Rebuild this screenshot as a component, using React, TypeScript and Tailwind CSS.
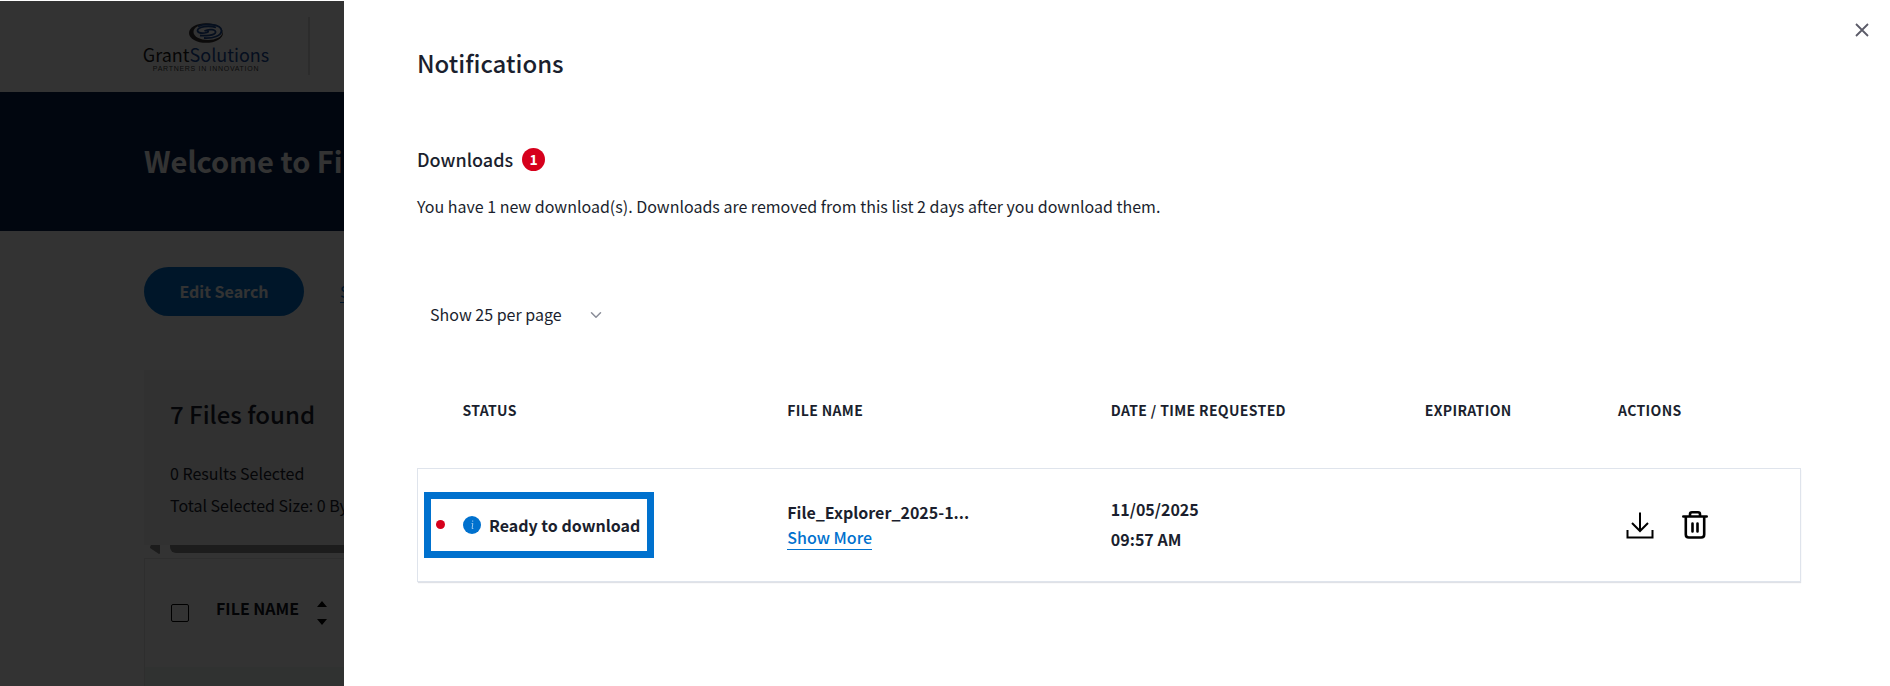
import { ChevronDown } from "lucide-react";

const columns = [
  { label: "Status", className: "w-[25%] pl-[45px]" },
  { label: "File Name", className: "w-[23.4%] pl-6" },
  { label: "Date / Time Requested", className: "w-[22.7%] pl-6" },
  { label: "Expiration", className: "w-[13.9%] pl-6" },
  { label: "Actions", className: "w-[15%] pl-[25px]" },
];

const downloads = [
  {
    status: "Ready to download",
    fileName: "File_Explorer_2025-1...",
    date: "11/05/2025",
    time: "09:57 AM",
  },
];

function Logo() {
  return (
    <div className="flex w-[124px] flex-col items-center pt-1">
      <svg viewBox="0 0 34 20" className="h-5 w-[34px]" aria-hidden="true">
        <ellipse cx="17" cy="10" rx="17" ry="9.800" fill="#3b3636" />
        <ellipse cx="19" cy="9" rx="14.500" ry="8" fill="#fff" />
        <path
          d="M9 3.500C15 0 32 .5 32.500 7.500C32.500 13 24 15.500 15 15"
          fill="none"
          stroke="#1d4a96"
          strokeWidth="1.800"
        />
        <path
          d="M27 4.500C20 2 9 3.500 8.500 7.500C8.500 10.500 14 10.500 18 9.500C21 8.500 18 7 15.500 8C20 5.500 27.500 6.500 26.500 9.500C25.500 12.500 16 13 11 12.500"
          fill="none"
          stroke="#1d4a96"
          strokeWidth="1.800"
        />
      </svg>
      <span className="flex text-[18px] leading-[22px]">
        <span className="text-[#1c1a1a]">Grant</span>
        <span className="text-[#1a4c9c]">Solutions</span>
      </span>
      <span className="font-['Liberation_Sans',sans-serif] text-[7px] leading-[8px] tracking-widest whitespace-nowrap text-[#444]">
        PARTNERS IN INNOVATION
      </span>
    </div>
  );
}

function FileExplorerPage() {
  return (
    <div className="h-full bg-white">
      <header className="flex h-[92px] items-center px-36">
        <Logo />
        <div className="ml-10 h-[58px] w-[2px] bg-[#dcdcdc]" />
      </header>

      <div className="flex h-[139px] items-center bg-[#05204a] px-36 pb-[3px]">
        <h1 className="text-[29px] leading-[36px] font-bold whitespace-nowrap text-white">
          Welcome to Files
        </h1>
      </div>

      <main className="px-36 pt-9">
        <div className="flex items-center gap-9">
          <button
            type="button"
            className="h-[49px] w-40 rounded-full bg-[#0071ce] pb-[2px] text-[16px] font-bold text-white"
          >
            Edit Search
          </button>
          <a
            href="#saved"
            className="border-b border-[#0071ce] text-[16px] leading-[22px] text-[#0071ce]"
          >
            Saved
          </a>
        </div>

        <section className="mt-[54px]">
          <div className="h-[175px] bg-[#f2f2f2] px-[26px] pt-[26px] text-[#1b1f2e]">
            <h2 className="text-[24px] leading-[36px] font-medium">
              7 Files found
            </h2>
            <p className="mt-[25px] text-[16px] leading-[32px]">
              0 Results Selected
            </p>
            <p className="text-[16px] leading-[32px]">
              Total Selected Size: 0 Bytes
            </p>
          </div>

          <div className="flex h-[13px] gap-[10px] pl-[6px]">
            <svg viewBox="0 0 10 9" className="h-[9px] w-[10px]" aria-hidden="true">
              <path d="M1 0h9v8q0 1-1 1L0 3Q0 1 1 0z" fill="#8b8b8b" />
            </svg>
            <div className="h-2 grow rounded-b-md bg-[#8b8b8b]" />
          </div>

          <div className="border border-[#e6e6e6]">
            <div className="flex h-[108px] items-center pl-[26px] text-[#12151f]">
              <input
                type="checkbox"
                aria-label="Select all files"
                className="size-[18px] appearance-none rounded-xs border border-black"
              />
              <span className="ml-[27px] pb-[10px] text-[16px] leading-[24px] font-bold">
                FILE NAME
              </span>
              <svg viewBox="0 0 10 24" className="ml-[18px] h-6 w-[10px]" aria-hidden="true">
                <path d="M5 0l5 6H0zM5 24l5-6H0z" />
              </svg>
            </div>
            <div className="h-10 bg-[#edf9f5]" />
          </div>
        </section>
      </main>
    </div>
  );
}

function DownloadsTable() {
  return (
    <table className="mt-4 w-full table-fixed border-collapse text-left">
      <thead>
        <tr className="h-[114px]">
          {columns.map((column) => (
            <th
              key={column.label}
              scope="col"
              className={`pb-px text-[14px] leading-[20px] font-bold tracking-wide uppercase ${column.className}`}
            >
              {column.label}
            </th>
          ))}
        </tr>
      </thead>

      <tbody>
        {downloads.map((item) => (
          <tr
            key={item.fileName}
            className="h-[113px] border border-[#dfe4ec] font-bold shadow-[0_2px_1px_#dfe1e6]"
          >
            <td className="pl-[6px]">
              <div className="flex h-[66px] w-[230px] items-center border-[7px] border-[#0071ce] pl-[5px]">
                <span className="size-[9px] rounded-full bg-[#d6001c]" />
                <svg
                  viewBox="0 0 18 18"
                  className="ml-[18px] size-[18px]"
                  aria-hidden="true"
                >
                  <circle cx="9" cy="9" r="9" fill="#0071ce" />
                  <path
                    d="M9.700 4.500v1.200M8.600 7.500h1.200l-.7 5h1.200"
                    fill="none"
                    stroke="#9cc9ee"
                    strokeWidth="1"
                  />
                </svg>
                <span className="ml-2 text-[16px] leading-[24px] whitespace-nowrap">
                  {item.status}
                </span>
              </div>
            </td>

            <td className="pl-6">
              <div className="text-[16px] leading-[26px]">{item.fileName}</div>
              <a
                href="#more"
                className="inline-block border-b border-[#0071ce] text-[16px] leading-[24px] font-medium text-[#0071ce]"
              >
                Show More
              </a>
            </td>

            <td className="pb-px pl-6">
              <div className="text-[16px] leading-[30px]">{item.date}</div>
              <div className="text-[16px] leading-[30px]">{item.time}</div>
            </td>

            <td className="pl-6" />

            <td className="pl-[33px]">
              <div className="flex items-center gap-7 text-black">
                <button type="button" aria-label="Download file">
                  <svg
                    viewBox="0 0 28 28"
                    className="size-7"
                    fill="none"
                    stroke="currentColor"
                    strokeWidth="2"
                  >
                    <path d="M14 1.500v18M6 12l8 8 8-8M1.500 19v7.500h25V19" />
                  </svg>
                </button>
                <button type="button" aria-label="Delete file">
                  <svg
                    viewBox="0 0 26 28"
                    className="h-7 w-[26px]"
                    fill="none"
                    stroke="currentColor"
                    strokeWidth="2.600"
                    strokeLinecap="round"
                  >
                    <path d="M1.300 5.500h23.400M8 5V3.200q0-1.900 2-1.900h6q2 0 2 1.900V5M3.800 6v17.500q0 3 3 3h12.400q3 0 3-3V6M10.500 12.500v8M15.500 12.500v8" />
                  </svg>
                </button>
              </div>
            </td>
          </tr>
        ))}
      </tbody>
    </table>
  );
}

export default function App() {
  return (
    <div className="relative h-screen overflow-hidden bg-white font-['Noto_Sans_CJK_SC',sans-serif]">
      <FileExplorerPage />
      <div className="absolute inset-0 top-px bg-black/80" />

      <aside
        role="dialog"
        aria-labelledby="notifications-title"
        className="absolute inset-y-0 right-0 left-86 bg-white pt-[43px] pr-[89px] pl-[73px] text-[#1b1f2e]"
      >
        <button
          type="button"
          aria-label="Close notifications"
          className="absolute top-[22px] right-5 p-px"
        >
          <svg viewBox="0 0 14 14" className="size-[14px]" aria-hidden="true">
            <path d="M1 1l12 12M13 1L1 13" stroke="#5b5b68" strokeWidth="1.800" />
          </svg>
        </button>

        <h2
          id="notifications-title"
          className="text-[24px] leading-[40px] font-medium"
        >
          Notifications
        </h2>

        <h3 className="mt-16 flex items-center gap-[9px] text-[18px] leading-[24px] font-medium">
          Downloads
          <span className="flex size-[23px] items-center justify-center rounded-full bg-[#d6001c] text-[14px] leading-[20px] font-bold text-white">
            1
          </span>
        </h3>

        <p className="mt-[23px] text-[16px] leading-[24px]">
          You have 1 new download(s). Downloads are removed from this list 2
          days after you download them.
        </p>

        <div className="relative mt-[72px] w-[200px]">
          <select
            aria-label="Results per page"
            className="h-12 w-full appearance-none bg-transparent pl-[13px] text-[16px]"
          >
            <option>Show 25 per page</option>
            <option>Show 50 per page</option>
            <option>Show 100 per page</option>
          </select>
          <ChevronDown
            className="pointer-events-none absolute top-4 right-3 size-[18px] text-[#8a8d98]"
            strokeWidth={2}
          />
        </div>

        <DownloadsTable />
      </aside>
    </div>
  );
}
